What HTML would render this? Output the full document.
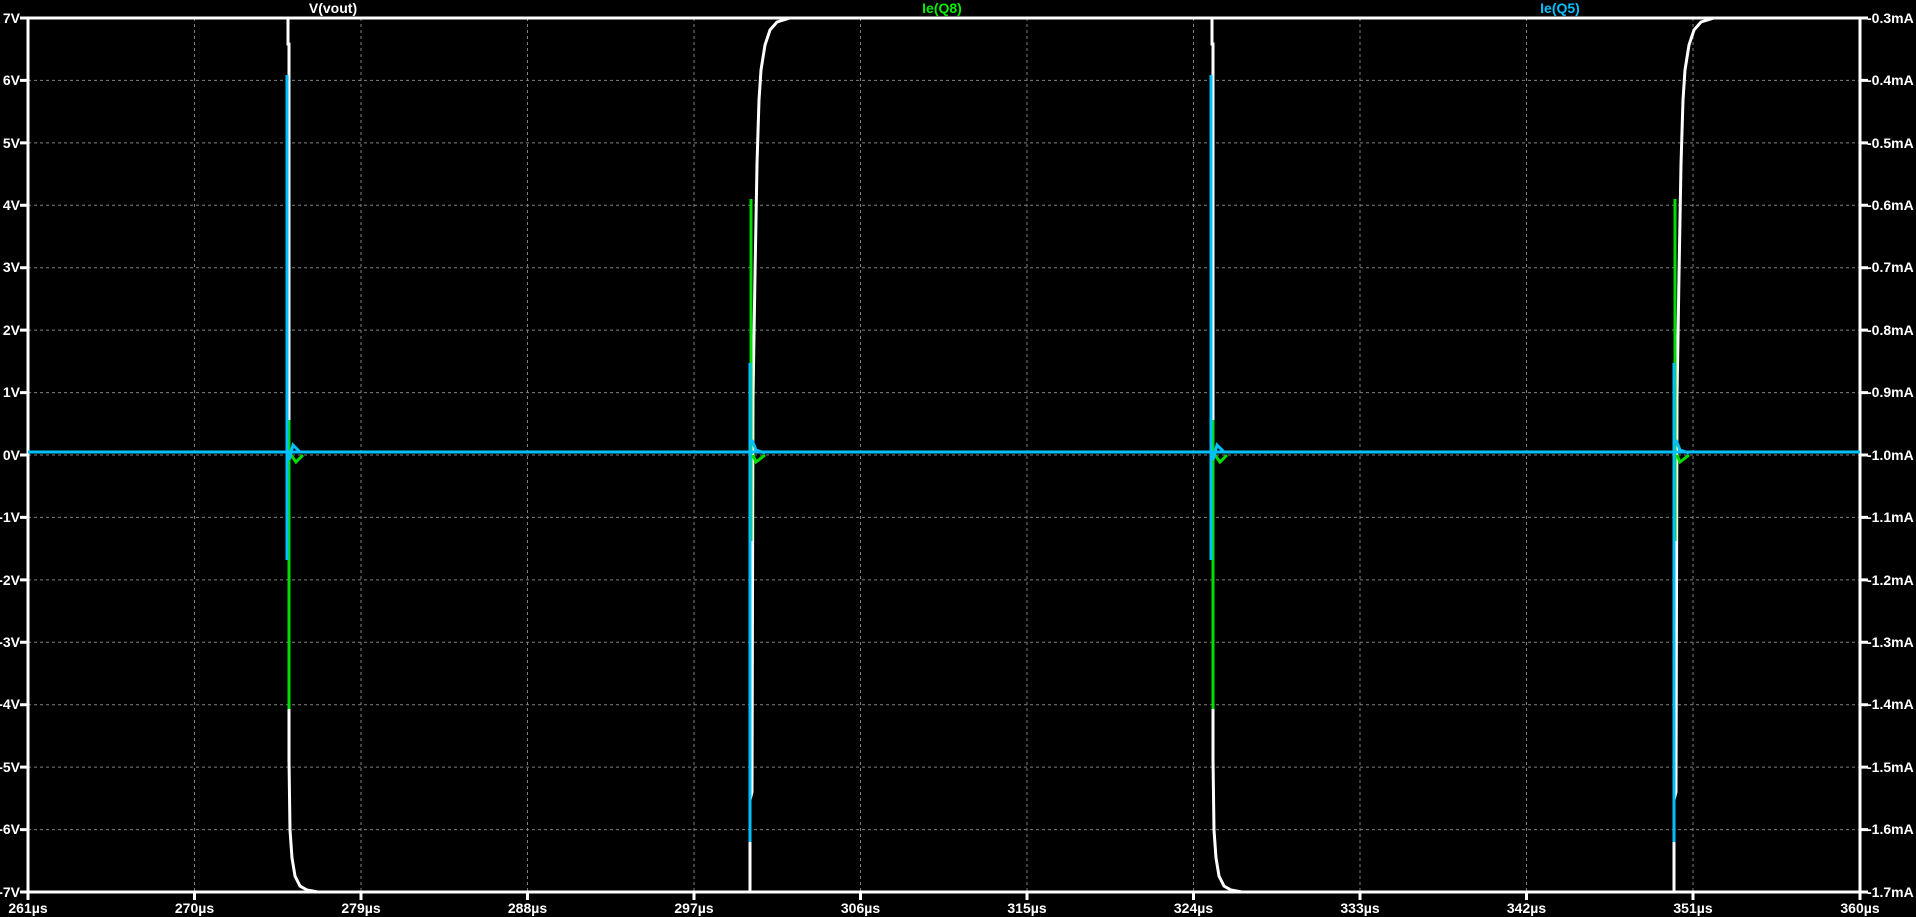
<!DOCTYPE html>
<html><head><meta charset="utf-8"><style>
html,body{margin:0;padding:0;background:#000;width:1916px;height:917px;overflow:hidden}
svg{display:block}
text{font-family:"Liberation Sans",sans-serif;font-size:14px;font-weight:bold}
</style></head><body>
<svg width="1916" height="917" viewBox="0 0 1916 917" xmlns="http://www.w3.org/2000/svg">
<rect width="1916" height="917" fill="#000"/>
<g stroke="#808080" stroke-width="1" stroke-dasharray="3,3" fill="none">
<path d="M194.5 18V892M361 18V892M527.5 18V892M694 18V892M860.5 18V892M1027 18V892M1193.5 18V892M1360 18V892M1526.5 18V892M1693 18V892"/>
<path d="M28 80.4H1860M28 142.9H1860M28 205.3H1860M28 267.7H1860M28 330.1H1860M28 392.6H1860M28 455H1860M28 517.4H1860M28 579.9H1860M28 642.3H1860M28 704.7H1860M28 767.1H1860M28 829.6H1860"/>
</g>
<rect x="28" y="18" width="1832" height="874" fill="none" stroke="#fff" stroke-width="3"/>
<g stroke="#fff" stroke-width="3">
<path d="M20 18H28M20 80.4H28M20 142.9H28M20 205.3H28M20 267.7H28M20 330.1H28M20 392.6H28M20 455H28M20 517.4H28M20 579.9H28M20 642.3H28M20 704.7H28M20 767.1H28M20 829.6H28M20 892H28"/>
<path d="M1860 18H1868M1860 80.4H1868M1860 142.9H1868M1860 205.3H1868M1860 267.7H1868M1860 330.1H1868M1860 392.6H1868M1860 455H1868M1860 517.4H1868M1860 579.9H1868M1860 642.3H1868M1860 704.7H1868M1860 767.1H1868M1860 829.6H1868M1860 892H1868"/>
<path d="M28 892V900M194.5 892V900M361 892V900M527.5 892V900M694 892V900M860.5 892V900M1027 892V900M1193.5 892V900M1360 892V900M1526.5 892V900M1693 892V900M1860 892V900"/>
</g>
<g fill="#fff" text-anchor="end">
<text x="20" y="23">7V</text><text x="20" y="85">6V</text><text x="20" y="148">5V</text><text x="20" y="210">4V</text><text x="20" y="272">3V</text><text x="20" y="335">2V</text><text x="20" y="397">1V</text><text x="20" y="460">0V</text><text x="20" y="522">-1V</text><text x="20" y="585">-2V</text><text x="20" y="647">-3V</text><text x="20" y="709">-4V</text><text x="20" y="772">-5V</text><text x="20" y="834">-6V</text><text x="20" y="897">-7V</text>
</g>
<g fill="#fff">
<text x="1867" y="23">-0.3mA</text><text x="1867" y="85">-0.4mA</text><text x="1867" y="148">-0.5mA</text><text x="1867" y="210">-0.6mA</text><text x="1867" y="272">-0.7mA</text><text x="1867" y="335">-0.8mA</text><text x="1867" y="397">-0.9mA</text><text x="1867" y="460">-1.0mA</text><text x="1867" y="522">-1.1mA</text><text x="1867" y="585">-1.2mA</text><text x="1867" y="647">-1.3mA</text><text x="1867" y="709">-1.4mA</text><text x="1867" y="772">-1.5mA</text><text x="1867" y="834">-1.6mA</text><text x="1867" y="897">-1.7mA</text>
</g>
<g fill="#fff" text-anchor="middle">
<text x="28" y="913">261µs</text><text x="194.5" y="913">270µs</text><text x="361" y="913">279µs</text><text x="527.5" y="913">288µs</text><text x="694" y="913">297µs</text><text x="860.5" y="913">306µs</text><text x="1027" y="913">315µs</text><text x="1193.5" y="913">324µs</text><text x="1360" y="913">333µs</text><text x="1526.5" y="913">342µs</text><text x="1693" y="913">351µs</text><text x="1860" y="913">360µs</text>
</g>
<text x="333" y="13" fill="#fff" text-anchor="middle">V(vout)</text>
<text x="942" y="13" fill="#00ee00" text-anchor="middle">Ie(Q8)</text>
<text x="1560" y="13" fill="#00c0ff" text-anchor="middle">Ie(Q5)</text>
<g fill="none" stroke="#fff" stroke-width="3">
<path d="M28 18H288V44H289V760L290 830L292 858L295 876L300 886L307 890L318 892H750V800L752 792L753 398L755 275L757 164L759 100L761 70L765 45L770 30L777 22L790 18H1212V44H1213V760L1214 830L1216 858L1219 876L1224 886L1231 890L1242 892H1674V800L1676 792L1677 398L1679 275L1681 164L1683 100L1685 70L1689 45L1694 30L1701 22L1714 18H1860"/>
</g>
<g fill="none" stroke="#00dd00" stroke-width="3">
<path d="M289 420V709"/><path d="M291 455L296 462L303 455"/>
<path d="M751 199V541"/><path d="M753 455L756 462L765 455"/>
<path d="M1213 420V709"/><path d="M1215 455L1220 462L1227 455"/>
<path d="M1675 199V541"/><path d="M1677 455L1680 462L1689 455"/>
</g>
<g fill="none" stroke="#00c0ff" stroke-width="3">
<path d="M28 452H1860"/>
<path d="M287 75V560"/><path d="M289 460L293 445L300 452"/>
<path d="M750 363V842"/><path d="M752 440L756 450L765 453"/>
<path d="M1211 75V560"/><path d="M1213 460L1217 445L1224 452"/>
<path d="M1674 363V842"/><path d="M1676 440L1680 450L1689 453"/>
</g>
</svg>
</body></html>
